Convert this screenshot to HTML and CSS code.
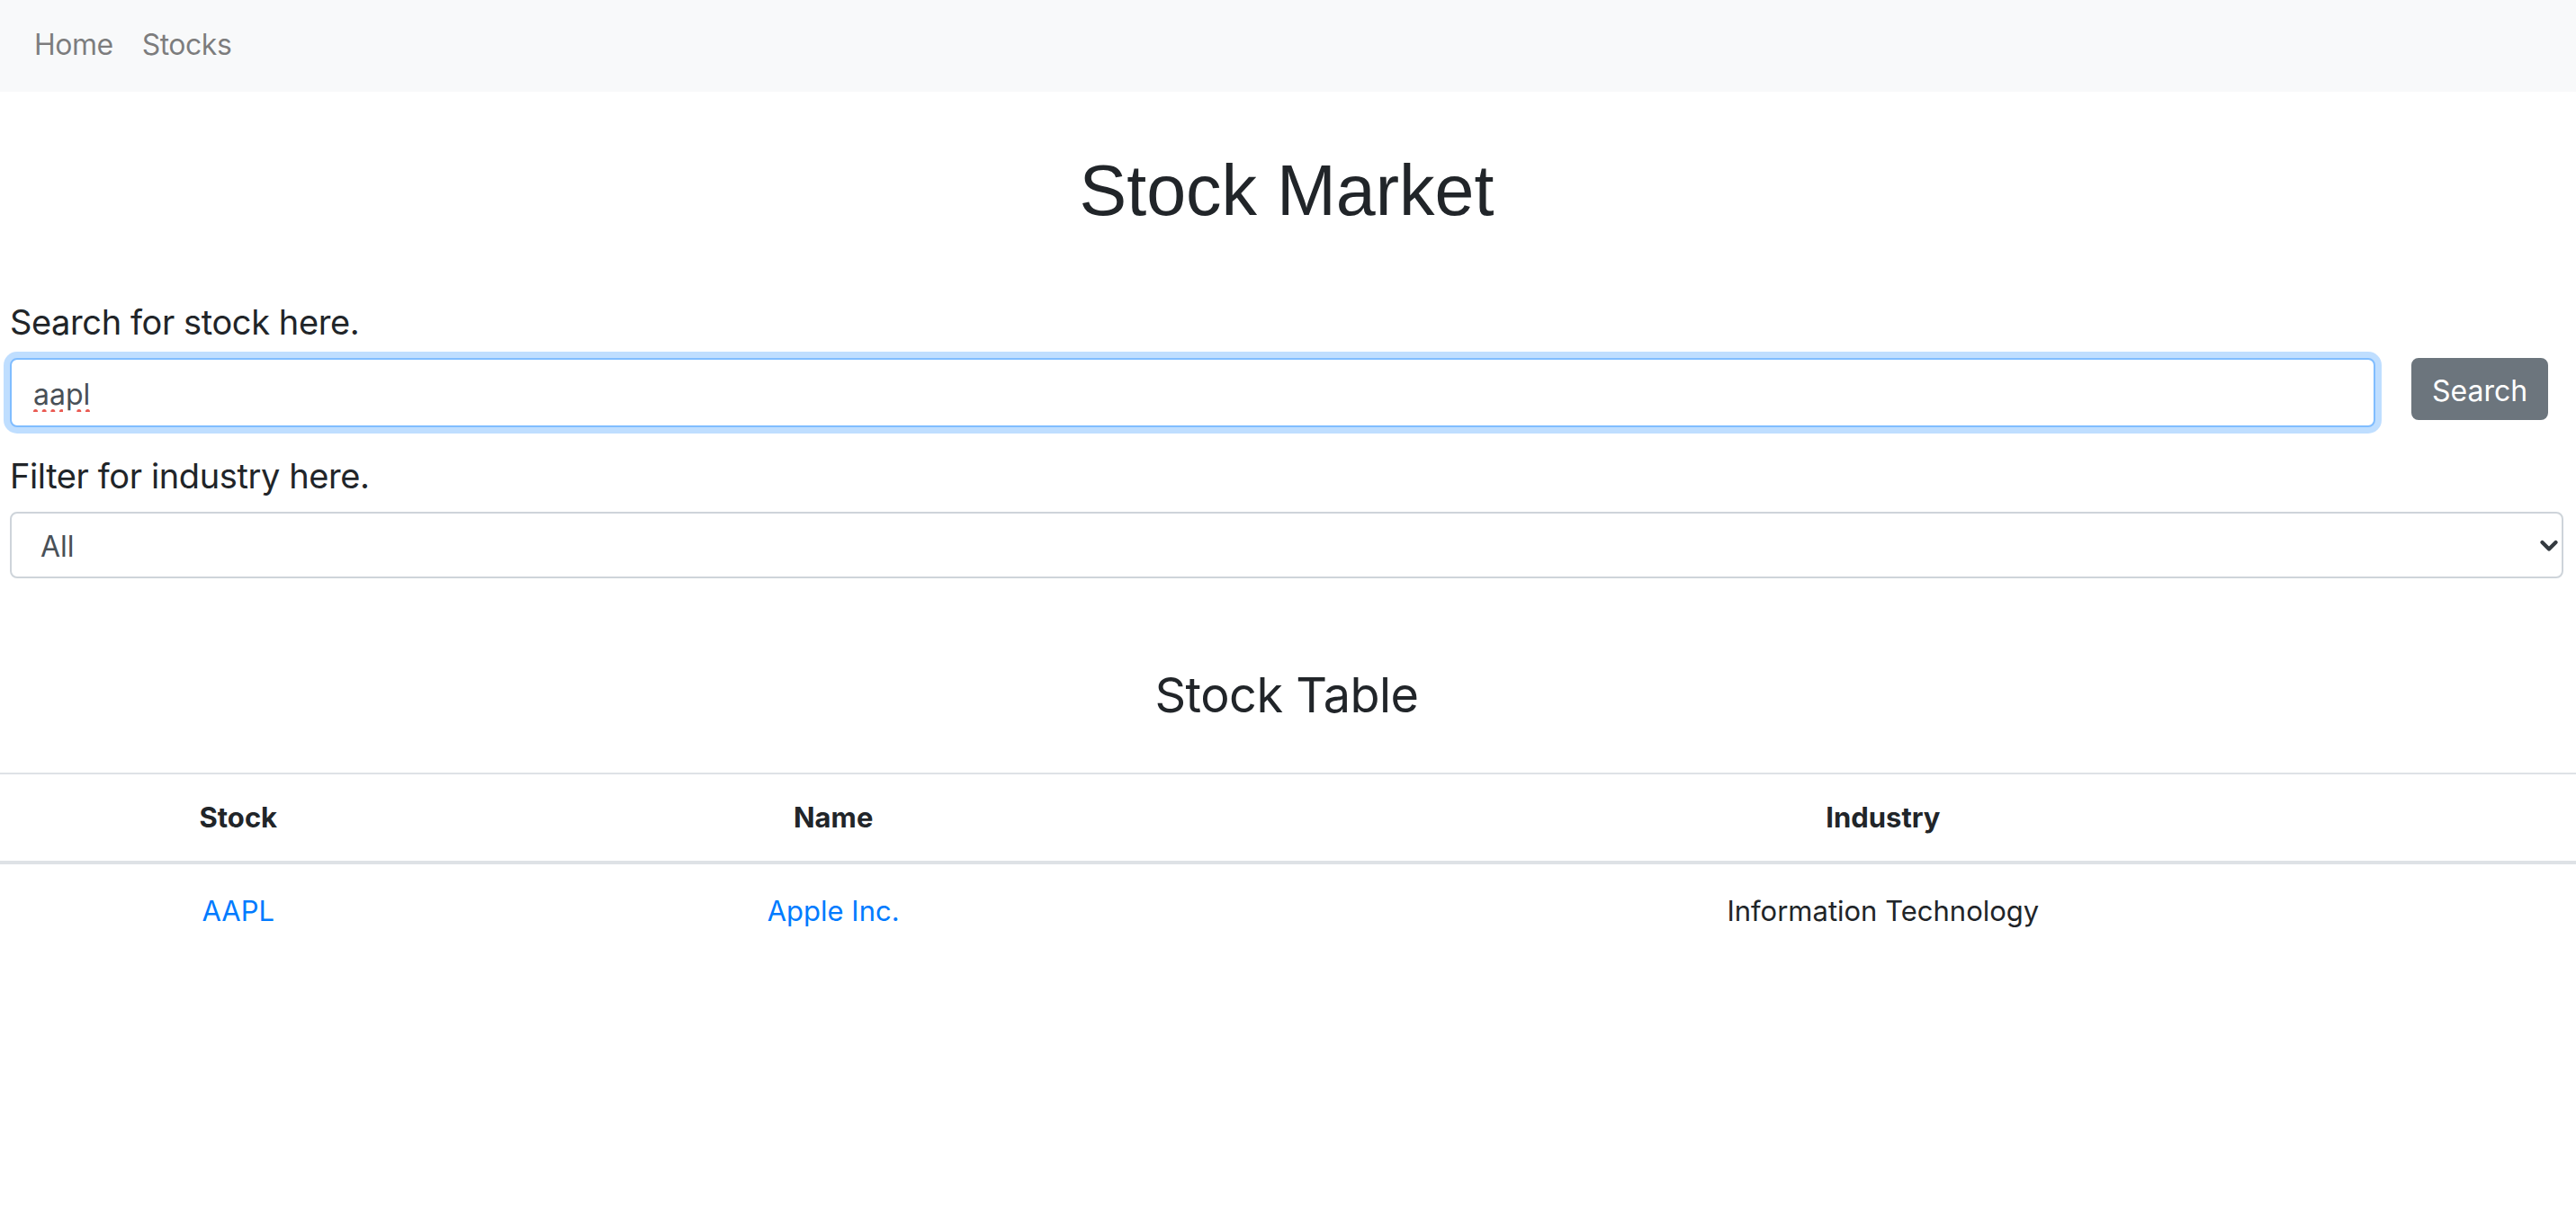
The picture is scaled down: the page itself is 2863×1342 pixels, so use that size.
FILE: index.html
```html
<!DOCTYPE html>
<html lang="en">
<head>
<meta charset="utf-8">
<title>Stock Market</title>
<link rel="stylesheet" href="styles.css">
</head>
<body>
<nav class="navbar">
  <a class="nav-link" href="#">Home</a>
  <a class="nav-link" href="#">Stocks</a>
</nav>
<main class="container">
  <h1 class="title">Stock Market</h1>
  <form class="search-form">
    <label class="field-label" for="q">Search for stock here.</label>
    <div class="search-row">
      <input id="q" class="form-control is-focused" type="text" value="aapl">
      <button class="btn" type="button">Search</button>
    </div>
    <label class="field-label" for="industry">Filter for industry here.</label>
    <div class="select-wrap">
      <select id="industry" class="form-select">
        <option>All</option>
      </select>
      <svg class="chevron" viewBox="0 0 20 14" width="20" height="14" aria-hidden="true"><path d="M2.5 3l7.5 7.5 7.5-7.5" fill="none" stroke="#343a40" stroke-width="4.2" stroke-linecap="round" stroke-linejoin="round"/></svg>
    </div>
  </form>
  <h2 class="subtitle">Stock Table</h2>
</main>
<table class="table">
  <colgroup>
    <col class="col-stock">
    <col class="col-name">
    <col class="col-industry">
  </colgroup>
  <thead>
    <tr><th>Stock</th><th>Name</th><th>Industry</th></tr>
  </thead>
  <tbody>
    <tr><td><a href="#">AAPL</a></td><td><a href="#">Apple Inc.</a></td><td>Information Technology</td></tr>
  </tbody>
</table>
</body>
</html>
```
FILE: styles.css
```css
* { box-sizing: border-box; }
html, body { margin: 0; padding: 0; background: #fff; }
body {
  font-family: "Inter", "Noto Sans", sans-serif;
  font-size: 32px;
  line-height: 1.5;
  color: #212529;
}
.navbar {
  display: flex;
  align-items: center;
  height: 102px;
  padding: 0 22px 3px;
  background: #f8f9fa;
}
.nav-link {
  padding: 0 16px;
  color: rgba(0, 0, 0, 0.5);
  text-decoration: none;
  font-size: 32px;
  letter-spacing: -0.5px;
}
.container {
  padding: 0 14px 0 11px;
}
.title {
  margin: 62px 0 0;
  text-align: center;
  font-family: "Liberation Sans", Arial, sans-serif;
  font-weight: 400;
  font-size: 79px;
  line-height: 96px;
}
.search-form {
  display: flex;
  flex-direction: column;
  margin-top: 70px;
}
.field-label {
  font-size: 38px;
  line-height: 56px;
  letter-spacing: -0.4px;
  margin-bottom: 12px;
}
.search-row {
  display: flex;
  align-items: flex-start;
  gap: 40px;
  margin-bottom: 26px;
  padding-right: 17px;
}
.form-control {
  flex: 1;
  height: 77px;
  padding: 4px 24px 0;
  font-family: inherit;
  font-size: 32px;
  color: #495057;
  border: 2px solid #80bdff;
  border-radius: 8px;
  outline: none;
  background: #fff;
  text-decoration: underline dotted #ea5a52;
  text-decoration-thickness: 5px;
  text-underline-offset: 5px;
}
.is-focused {
  box-shadow: 0 0 0 7px rgba(0, 123, 255, 0.25);
}
.btn {
  height: 69px;
  width: 152px;
  padding: 4px 0 0;
  font-family: inherit;
  font-size: 32px;
  color: #fff;
  background: #6c757d;
  border: 2px solid #6c757d;
  border-radius: 8px;
}
.select-wrap {
  position: relative;
}
.form-select {
  display: block;
  width: 100%;
  height: 74px;
  padding: 2px 24px 0 32px;
  font-family: inherit;
  font-size: 32px;
  color: #495057;
  background: #fff;
  border: 2px solid #ced4da;
  border-radius: 8px;
  appearance: none;
  -webkit-appearance: none;
}
.chevron {
  position: absolute;
  right: 6px;
  top: 31px;
}
.subtitle {
  margin: 97px 0 0;
  text-align: center;
  font-weight: 400;
  font-size: 54px;
  line-height: 65px;
  letter-spacing: -0.5px;
}
.table {
  width: 100%;
  margin-top: 54px;
  border-collapse: collapse;
}
.col-stock { width: 18.5%; }
.col-name { width: 27.7%; }
.table th, .table td {
  padding: 24px;
  text-align: center;
  border-top: 2px solid #dee2e6;
  font-size: 31px;
  line-height: 48px;
}
.table td {
  padding-top: 28px;
}
.table th {
  font-weight: 700;
  border-bottom: 4px solid #dee2e6;
}
.table td a {
  color: #007bff;
  text-decoration: none;
}
```
